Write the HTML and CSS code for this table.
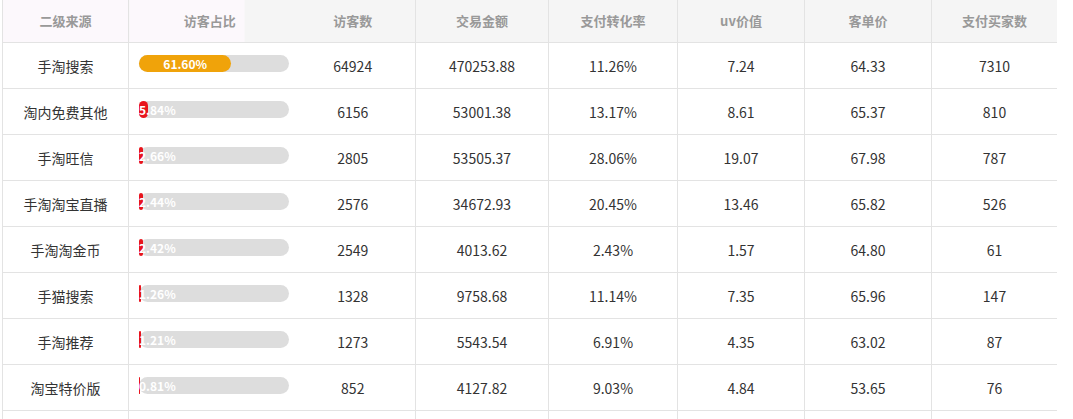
FILE: index.html
```html
<!DOCTYPE html>
<html lang="zh-CN">
<head>
<meta charset="utf-8">
<title>二级来源</title>
<link rel="stylesheet" href="styles.css">
</head>
<body>
<div class="wrap">
<table class="grid">
  <colgroup>
    <col class="c1"><col class="c2"><col class="c3"><col class="c4"><col class="c5"><col class="c6"><col class="c7"><col class="c8">
  </colgroup>
  <thead>
    <tr>
      <th class="fixed">二级来源</th>
      <th class="fixed-split no-right">访客占比</th>
      <th class="no-left">访客数</th>
      <th>交易金额</th>
      <th>支付转化率</th>
      <th>uv价值</th>
      <th>客单价</th>
      <th>支付买家数</th>
    </tr>
  </thead>
  <tbody>
    <tr>
      <td>手淘搜索</td>
      <td class="bar-cell no-right"><div class="bar"><div class="fill big" style="width:61.60%">61.60%</div></div></td>
      <td class="no-left">64924</td><td>470253.88</td><td>11.26%</td><td>7.24</td><td>64.33</td><td>7310</td>
    </tr>
    <tr>
      <td>淘内免费其他</td>
      <td class="bar-cell no-right"><div class="bar"><div class="fill" style="width:5.84%">5.84%</div></div></td>
      <td class="no-left">6156</td><td>53001.38</td><td>13.17%</td><td>8.61</td><td>65.37</td><td>810</td>
    </tr>
    <tr>
      <td>手淘旺信</td>
      <td class="bar-cell no-right"><div class="bar"><div class="fill" style="width:2.66%">2.66%</div></div></td>
      <td class="no-left">2805</td><td>53505.37</td><td>28.06%</td><td>19.07</td><td>67.98</td><td>787</td>
    </tr>
    <tr>
      <td>手淘淘宝直播</td>
      <td class="bar-cell no-right"><div class="bar"><div class="fill" style="width:2.44%">2.44%</div></div></td>
      <td class="no-left">2576</td><td>34672.93</td><td>20.45%</td><td>13.46</td><td>65.82</td><td>526</td>
    </tr>
    <tr>
      <td>手淘淘金币</td>
      <td class="bar-cell no-right"><div class="bar"><div class="fill" style="width:2.42%">2.42%</div></div></td>
      <td class="no-left">2549</td><td>4013.62</td><td>2.43%</td><td>1.57</td><td>64.80</td><td>61</td>
    </tr>
    <tr>
      <td>手猫搜索</td>
      <td class="bar-cell no-right"><div class="bar"><div class="fill" style="width:1.26%">1.26%</div></div></td>
      <td class="no-left">1328</td><td>9758.68</td><td>11.14%</td><td>7.35</td><td>65.96</td><td>147</td>
    </tr>
    <tr>
      <td>手淘推荐</td>
      <td class="bar-cell no-right"><div class="bar"><div class="fill" style="width:1.21%">1.21%</div></div></td>
      <td class="no-left">1273</td><td>5543.54</td><td>6.91%</td><td>4.35</td><td>63.02</td><td>87</td>
    </tr>
    <tr>
      <td>淘宝特价版</td>
      <td class="bar-cell no-right"><div class="bar"><div class="fill" style="width:0.81%">0.81%</div></div></td>
      <td class="no-left">852</td><td>4127.82</td><td>9.03%</td><td>4.84</td><td>53.65</td><td>76</td>
    </tr>
    <tr class="tail">
      <td></td>
      <td class="bar-cell no-right"></td>
      <td class="no-left"></td><td></td><td></td><td></td><td></td><td></td>
    </tr>
  </tbody>
</table>
</div>
</body>
</html>
```

FILE: styles.css
```css
html, body {
  margin: 0;
  padding: 0;
  background: #ffffff;
}

body {
  font-family: "Noto Sans CJK SC", "Noto Sans", "Liberation Sans", sans-serif;
  color: #333333;
}

.wrap {
  padding-left: 2px;
  width: 1055px;
  height: 419px;
  overflow: hidden;
}

.grid {
  border-collapse: collapse;
  table-layout: fixed;
  width: 1055px;
}

.c1 { width: 126px; }
.c2 { width: 162px; }
.c3 { width: 125px; }
.c4 { width: 133px; }
.c5 { width: 129px; }
.c6 { width: 127px; }
.c7 { width: 127px; }
.c8 { width: 126px; }

.grid th,
.grid td {
  border: 1px solid #e3e3e3;
  border-top: none;
  text-align: center;
  vertical-align: middle;
  padding: 0;
  white-space: nowrap;
  line-height: 20px;
}

.grid th {
  height: 41px;
  background: #f5f5f5;
  color: #999999;
  font-size: 13px;
  font-weight: bold;
  padding-bottom: 1px;
}

.grid th.fixed {
  background: #fcf8fc;
}

.grid th.fixed-split {
  background: linear-gradient(to right, #fcf8fc 115px, #f5f5f5 115px);
}

.grid td {
  height: 44px;
  font-size: 14px;
  color: #333333;
  padding-top: 1px;
}

.grid .no-right {
  border-right: none;
}

.grid .no-left {
  border-left: none;
}

.grid td.bar-cell {
  height: 40px;
  text-align: left;
  padding: 0 0 5px 10px;
}

.bar {
  width: 150px;
  height: 17px;
  border-radius: 9px;
  background: #dddddd;
}

.fill {
  height: 17px;
  border-radius: 9px;
  background: #e8141c;
  color: #ffffff;
  font-size: 12px;
  font-weight: bold;
  line-height: 17px;
  text-align: center;
  white-space: nowrap;
}

.fill.big {
  background: #f0a30a;
}
```
